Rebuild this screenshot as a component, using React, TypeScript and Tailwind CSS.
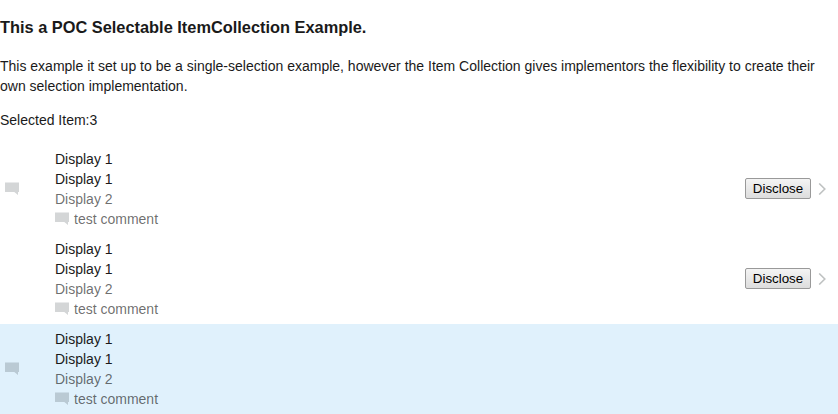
type Item = { id: number; lead: boolean; disclose: boolean; selected: boolean };

const items: Item[] = [
  { id: 1, lead: true, disclose: true, selected: false },
  { id: 2, lead: false, disclose: true, selected: false },
  { id: 3, lead: true, disclose: false, selected: true },
];

function Comment() {
  return (
    <svg width="14" height="14" viewBox="0 0 14 14" className="shrink-0 text-[#0f1923]/18" fill="currentColor">
      <path d="M0 .5H14V10H13V13L9.3 10H0Z" />
    </svg>
  );
}

function Row({ item }: { item: Item }) {
  return (
    <div className={`flex h-[90px] items-center ${item.selected ? "bg-[#e0f1fc]" : "bg-white"}`}>
      <div className="w-[55px] pl-[5px]">{item.lead && <Comment />}</div>
      <div className="grow">
        <div>Display 1</div>
        <div>Display 1</div>
        <div className="text-[#1a1a1a]/65">Display 2</div>
        <div className="flex items-center gap-[5px]">
          <Comment />
          <span className="text-[#1a1a1a]/65">test comment</span>
        </div>
      </div>
      {item.disclose && (
        <div className="flex items-center gap-[7px] pr-3">
          <button className="mb-0.5 h-[21px] w-[66px] rounded-[2px] border border-[#999] bg-linear-to-b from-[#f4f4f4] to-[#dddddd] text-[13.333px] leading-[19px] text-black">
            Disclose
          </button>
          <svg width="8" height="12" viewBox="0 0 8 12" fill="none" stroke="#bfc2c2" strokeWidth="1.6">
            <path d="M1.2.5L6.8 6L1.2 11.5" />
          </svg>
        </div>
      )}
    </div>
  );
}

export default function App() {
  return (
    <main className="h-[414px] overflow-hidden bg-white font-['Liberation_Sans',Arial,sans-serif] text-sm leading-5 text-[#1a1a1a]">
      <h1 className="pt-[15px] text-[16.38px] leading-6 font-bold">This a POC Selectable ItemCollection Example.</h1>
      <p className="mt-[17px]">
        This example it set up to be a single-selection example, however the Item Collection gives implementors the
        flexibility to create their own selection implementation.
      </p>
      <p className="mt-3.5 mb-3.5">Selected Item:3</p>
      {items.map((item) => (
        <Row key={item.id} item={item} />
      ))}
    </main>
  );
}
